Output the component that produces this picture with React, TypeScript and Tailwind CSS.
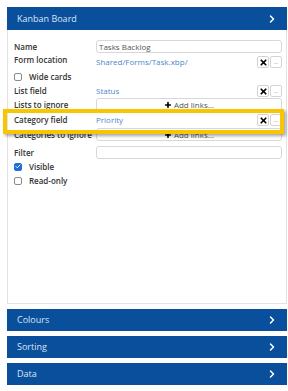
import React from 'react';
import { ChevronRight, X, Plus, Check } from 'lucide-react';

const font = { fontFamily: '"Open Sans", "Liberation Sans", sans-serif' };

const Header = ({ title, className = '' }: { title: string; className?: string }) => (
  <div className={`h-[22px] bg-[#0a4f9b] flex items-center justify-between pl-[10px] pr-[9px] ${className}`}>
    <span className="text-[9px] text-[#d9e6f6]">{title}</span>
    <ChevronRight size={12} strokeWidth={3} className="text-white" />
  </div>
);

const Buttons = () => (
  <div className="flex items-center gap-[1px]">
    <div className="w-[12px] h-[12px] border border-[#d4d4d4] rounded-[2px] bg-white flex items-center justify-center">
      <X size={9} strokeWidth={4.5} className="text-black" />
    </div>
    <div className="w-[12px] h-[12px] border border-[#d4d4d4] rounded-[2px] bg-white flex items-end justify-center pb-[2px]">
      <span className="text-[6px] leading-none text-[#888]">...</span>
    </div>
  </div>
);

const Label = ({ children }: { children: React.ReactNode }) => (
  <div className="w-[82px] shrink-0 text-[8px] font-semibold text-[#333] leading-none">{children}</div>
);

const LinkRow = ({ label, value, className = '' }: { label: string; value: string; className?: string }) => (
  <div className={`flex items-center h-[13px] ${className}`}>
    <Label>{label}</Label>
    <div className="flex-1 flex items-center justify-between">
      <span className="text-[8px] text-[#4a88c9] leading-none">{value}</span>
      <Buttons />
    </div>
  </div>
);

const AddLinks = ({ label, className = '' }: { label: string; className?: string }) => (
  <div className={`flex items-center h-[13px] ${className}`}>
    <Label>{label}</Label>
    <div className="flex-1 h-[13px] border border-[#d8d8d8] rounded-[3px] flex items-center justify-center gap-[2px]">
      <Plus size={8} strokeWidth={5} className="text-black" />
      <span className="text-[8px] text-[#555] leading-none">Add links...</span>
    </div>
  </div>
);

const CheckRow = ({ label, checked, className = '' }: { label: string; checked?: boolean; className?: string }) => (
  <div className={`flex items-center h-[13px] ${className}`}>
    <div
      className={`w-[8px] h-[8px] rounded-[2px] border flex items-center justify-center ${
        checked ? 'bg-[#1f6fd6] border-[#1f6fd6]' : 'bg-white border-[#8a8a8a]'
      }`}
    >
      {checked && <Check size={7} strokeWidth={4} className="text-white" />}
    </div>
    <span className="ml-[7px] text-[8px] font-semibold text-[#333] leading-none">{label}</span>
  </div>
);

export default function App() {
  return (
    <div className="relative w-[288px] h-[391px] bg-white overflow-hidden" style={font}>
      <div className="ml-[7px] mr-[1px] pt-[7px]">
        <Header title="Kanban Board" className="h-[23px]" />
        <div className="h-[274px] border-x border-b border-[#e3e3e3] bg-white pl-[6px] pr-[4px] pt-[10px]">
          <div className="flex items-center h-[13px]">
            <Label>Name</Label>
            <div className="flex-1 h-[13px] border border-[#d8d8d8] rounded-[3px] flex items-center px-[2px]">
              <span className="text-[8px] text-[#555] leading-none">Tasks Backlog</span>
            </div>
          </div>
          <LinkRow label="Form location" value="Shared/Forms/Task.xbp/" className="mt-[3px] h-[14px] items-start" />
          <CheckRow label="Wide cards" />
          <LinkRow label="List field" value="Status" className="mt-[1px] h-[14px]" />
          <AddLinks label="Lists to ignore" />
          <LinkRow label="Category field" value="Priority" className="mt-[2px] h-[14px]" />
          <AddLinks label="Categories to ignore" className="mt-[1px]" />
          <div className="flex items-center h-[13px] mt-[5px]">
            <Label>Filter</Label>
            <div className="flex-1 h-[13px] border border-[#d8d8d8] rounded-[3px]" />
          </div>
          <CheckRow label="Visible" checked className="mt-[1px]" />
          <CheckRow label="Read-only" className="mt-[1px]" />
        </div>
        <Header title="Colours" className="mt-[5px]" />
        <Header title="Sorting" className="mt-[5px]" />
        <Header title="Data" className="mt-[5px]" />
      </div>
      {/* highlight over the category field row */}
      <div className="absolute left-[3px] top-[109px] w-[281px] h-[25px] border-[4px] border-[#f7c600] shadow-[2px_2px_3px_rgba(0,0,0,0.35)] pointer-events-none" />
    </div>
  );
}
